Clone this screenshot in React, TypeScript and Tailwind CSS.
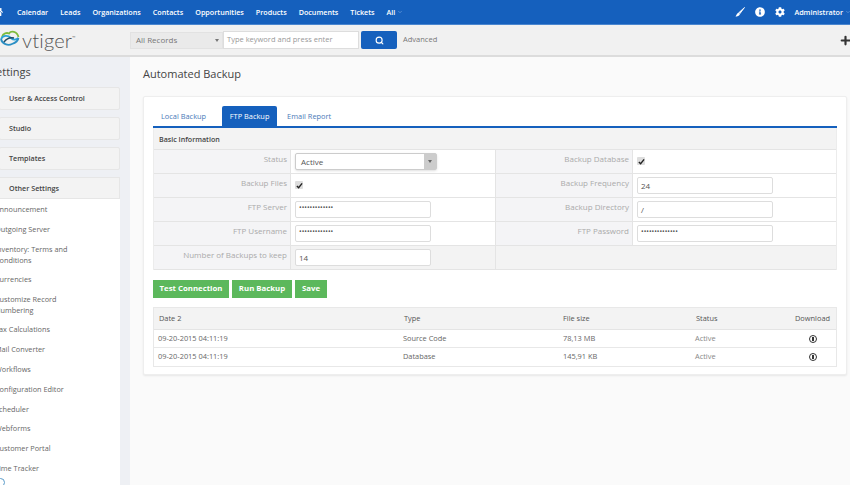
import React from "react";
import { Search, Plus, ChevronDown } from "lucide-react";
import { FaCog, FaHome, FaInfoCircle } from "react-icons/fa";

const nav = ["Calendar", "Leads", "Organizations", "Contacts", "Opportunities", "Products", "Documents", "Tickets"];
const links: [string, number][] = [
  ["Announcement", 1], ["Outgoing Server", 1], ["Inventory: Terms and Conditions", 2], ["Currencies", 1],
  ["Customize Record Numbering", 2], ["Tax Calculations", 1], ["Mail Converter", 1], ["Workflows", 1],
  ["Configuration Editor", 1], ["Scheduler", 1], ["Webforms", 1], ["Customer Portal", 1], ["Time Tracker", 1],
];

function Logo() {
  return (
    <svg width="21" height="20" viewBox="0 0 21 20" fill="none" className="shrink-0">
      <path d="M2 7 C3 3 7 2.5 9 3.5 C11 0.5 17 1 18.5 7" stroke="#7dbb3c" strokeWidth="1.8" />
      <path d="M1 9 C3 5 8 5 11 8 C13 10 16 10 18.5 8" stroke="#2aa3d8" strokeWidth="1.8" />
      <path d="M1 9 C2 14 8 16 12 14 C15 13 18 11 18.5 8" stroke="#2b8fc4" strokeWidth="1.8" />
      <path d="M4 12 C7 8 10 7 14 8" stroke="#1e4a66" strokeWidth="1.4" />
    </svg>
  );
}

function Group({ label }: { label: string }) {
  return (
    <div className="h-[23px] mb-[7px] bg-[#f3f3f3] border border-[#e6e6e6] rounded-[2px] flex items-center pl-[9px] font-semibold text-[#444] text-[7.2px] w-[121px] -ml-px">
      {label}
    </div>
  );
}

function Row({ last, children }: { last?: boolean; children: React.ReactNode }) {
  return <div className={`flex h-6 border-b border-[#e4e4e4] ${last ? "bg-[#f3f3f3]" : ""}`}>{children}</div>;
}

function Label({ children }: { children?: React.ReactNode }) {
  return (
    <div className="w-[137px] shrink-0 bg-[#f4f4f6] border-r border-[#e4e4e4] text-right pr-[3px] pt-[3px] text-[8px] leading-3 text-[#aaa]">
      {children}
    </div>
  );
}

function Field({ value, secret }: { value: string; secret?: boolean }) {
  return (
    <div className={`w-[136px] h-[17px] mt-[3px] ml-1 bg-white border border-[#ddd] rounded-[2px] pl-[3px] flex items-center text-[#555] ${secret ? "text-[7px] pb-[3px]" : "text-[8px] pt-px"}`}>
      {value}
    </div>
  );
}

function Check() {
  return (
    <div className="w-[8px] h-[8px] mt-[7px] ml-1 bg-[#ddd] rounded-[1px] flex items-center justify-center">
      <svg width="7" height="7" viewBox="0 0 8 8" fill="none">
        <path d="M1 4.5 L3 6.5 L7 1.5" stroke="#222" strokeWidth="1.6" />
      </svg>
    </div>
  );
}

function Dl() {
  return (
    <div className="w-[8px] h-[8px] rounded-full border-[1.5px] border-[#333] flex items-center justify-center">
      <div className="w-[1.5px] h-[4px] bg-[#333]" />
    </div>
  );
}

export default function App() {
  return (
    <div className="w-[850px] h-[485px] overflow-hidden bg-[#fafafa] font-['Open_Sans',sans-serif] flex flex-col">
      <header className="h-[25px] shrink-0 bg-[#1560bd] border-b border-[#4a86cf] flex items-center text-white text-[7.2px] font-semibold">
        <FaHome size={10} className="-ml-[7px] mr-[14px] shrink-0" />
        <nav className="flex gap-[12px] items-center">
          {nav.map((n) => <span key={n}>{n}</span>)}
          <span className="flex items-center gap-[2px]">All <ChevronDown size={6} className="text-[#8fb4e4]" /></span>
        </nav>
        <div className="ml-auto flex items-center">
          <svg width="10" height="10" viewBox="0 0 10 10" className="mr-[10px]">
            <path d="M9.5 0.5 L4 5.5 L5 6.5 Z" fill="white" stroke="white" strokeWidth="0.8" />
            <path d="M3.5 5.5 L5 7 C4.5 9 2 9.5 0.5 9.5 C1.5 8.5 1.5 6.5 3.5 5.5 Z" fill="white" />
          </svg>
          <FaInfoCircle size={10} className="mr-[10px]" />
          <FaCog size={10} className="mr-[9px]" />
          <span>Administrator</span>
          <ChevronDown size={6} className="ml-[2px] -mr-px text-[#8fb4e4]" />
        </div>
      </header>

      <div className="h-[32px] shrink-0 bg-[#f1f1f1] border-b-2 border-[#dcdcdc] flex items-center">
        <div className="w-[130px] shrink-0 flex items-center">
          <Logo />
          <span className="font-['Lato',sans-serif] font-light text-[20px] leading-none text-[#555] ml-px tracking-[0.2px]">vtiger</span>
          <span className="text-[4px] text-[#666] self-start mt-[5px]">™</span>
        </div>
        <div className="w-[93px] h-[17px] bg-[#eaeaea] border border-[#e2e2e2] flex items-center justify-between pl-[5px] pr-[3px] text-[8px] text-[#777]">
          All Records
          <span className="w-0 h-0 border-x-[2.5px] border-x-transparent border-t-[3px] border-t-[#777]" />
        </div>
        <div className="w-[136px] h-[18px] bg-white border border-[#ddd] pl-[3px] flex items-center text-[7.5px] text-[#999]">
          Type keyword and press enter
        </div>
        <div className="w-[36px] h-[18px] ml-[2px] bg-[#1560bd] rounded-[2px] flex items-center justify-center">
          <Search size={9} className="text-white" strokeWidth={3} />
        </div>
        <span className="ml-[6px] text-[7.5px] text-[#777]">Advanced</span>
        <Plus size={13} strokeWidth={4} className="ml-auto text-[#333] -mr-[2px]" />
      </div>

      <div className="flex flex-1 min-h-0">
        <aside className="w-[130px] shrink-0 bg-[#eef0f4] overflow-hidden">
          <div className="text-[11px] leading-none text-[#444] pt-[9px] pb-[10px] -ml-[10px]">Settings</div>
          <Group label="User & Access Control" />
          <Group label="Studio" />
          <Group label="Templates" />
          <div className="h-[22px] bg-[#f3f3f3] border border-[#e6e6e6] flex items-center pl-[9px] font-semibold text-[#444] text-[7.2px] w-[121px] -ml-px">
            Other Settings
          </div>
          <ul className="bg-white w-[120px] h-[320px] text-[7.3px] leading-[11px] text-[#666]">
            {links.map(([l, n]) => (
              <li key={l} className={`${n === 2 ? "h-[30.5px]" : "h-[19.8px]"} pt-[5px] -ml-[5px] w-[80px]`}>{l}</li>
            ))}
            <li className="-ml-[4px]">
              <div className="w-[9px] h-[9px] rounded-full border border-[#5a9bc9]" />
            </li>
          </ul>
        </aside>

        <main className="flex-1 min-w-0 pl-[13px] pr-[4px]">
          <h1 className="text-[11px] leading-4 text-[#444] mt-[9px] mb-[14px]">Automated Backup</h1>
          <section className="w-[704px] h-[279px] bg-white border border-[#eee] rounded-[2px] shadow-[0_1px_2px_rgba(0,0,0,0.08)] pl-[9px] pr-[9px] pt-[9px]">
            <div className="flex border-b-2 border-[#1560bd] h-[22px] text-[7.4px] text-[#4a7ab8]">
              <span className="pl-[8px] pr-[8px] pt-[5px] mr-[8px]">Local Backup</span>
              <span className="w-[55px] text-center pt-[5px] bg-[#1560bd] text-white rounded-t-[2px] mr-[2px]">FTP Backup</span>
              <span className="px-[8px] pt-[5px]">Email Report</span>
            </div>
            <div className="border-x border-[#ececec]">
              <div className="h-[22px] bg-[#f3f3f3] border-b border-[#e4e4e4] flex items-center pl-[5px] pt-px font-semibold text-[#444] text-[7.1px]">
                Basic Information
              </div>
              <Row>
                <Label>Status</Label>
                <div className="w-[205px] border-r border-[#e4e4e4]">
                  <div className="w-[142px] h-[17px] mt-[3px] ml-1 bg-white border border-[#ccc] rounded-[2px] flex items-center justify-between pl-[5px] text-[8px] text-[#555] shadow-sm">
                    Active
                    <span className="w-[12px] h-full bg-[#ccc] flex items-center justify-center">
                      <span className="w-0 h-0 border-x-[2px] border-x-transparent border-t-[3px] border-t-[#666]" />
                    </span>
                  </div>
                </div>
                <Label>Backup Database</Label>
                <div className="flex-1"><Check /></div>
              </Row>
              <Row>
                <Label>Backup Files</Label>
                <div className="w-[205px] border-r border-[#e4e4e4]"><Check /></div>
                <Label>Backup Frequency</Label>
                <div className="flex-1"><Field value="24" /></div>
              </Row>
              <Row>
                <Label>FTP Server</Label>
                <div className="w-[205px] border-r border-[#e4e4e4]"><Field secret value="•••••••••••••" /></div>
                <Label>Backup Directory</Label>
                <div className="flex-1"><Field value="/" /></div>
              </Row>
              <Row>
                <Label>FTP Username</Label>
                <div className="w-[205px] border-r border-[#e4e4e4]"><Field secret value="•••••••••••••" /></div>
                <Label>FTP Password</Label>
                <div className="flex-1"><Field secret value="••••••••••••••" /></div>
              </Row>
              <Row last>
                <Label>Number of Backups to keep</Label>
                <div className="w-[205px] border-r border-[#e4e4e4]"><Field value="14" /></div>
                <div className="flex-1" />
              </Row>
            </div>
            <div className="flex gap-[3px] mt-[10px] text-[7.8px] font-bold text-white">
              <button className="h-[18px] w-[76px] bg-[#5cb85c]">Test Connection</button>
              <button className="h-[18px] w-[60px] bg-[#5cb85c]">Run Backup</button>
              <button className="h-[18px] w-[32px] bg-[#5cb85c]">Save</button>
            </div>
            <div className="mt-[9px] border border-[#e8e8e8] text-[7.4px] text-[#666]">
              <div className="h-[22px] bg-[#f3f3f3] border-b border-[#e4e4e4] flex items-center text-[#555]">
                <span className="w-[249px] pl-[5px]">Date 2</span>
                <span className="w-[160px] pl-px">Type</span>
                <span className="w-[133px]">File size</span>
                <span className="w-[99px]">Status</span>
                <span className="flex-1">Download</span>
              </div>
              {[["Source Code", "78,13 MB"], ["Database", "145,91 KB"]].map(([t, s]) => (
                <div key={t} className="h-[18px] border-b border-[#e8e8e8] last:border-b-0 flex items-center">
                  <span className="w-[249px] pl-[4px]">09-20-2015 04:11:19</span>
                  <span className="w-[160px]">{t}</span>
                  <span className="w-[132px]">{s}</span>
                  <span className="w-[100px] text-[#888]">Active</span>
                  <span className="flex-1 pl-[14px]"><Dl /></span>
                </div>
              ))}
            </div>
          </section>
        </main>
      </div>
    </div>
  );
}
